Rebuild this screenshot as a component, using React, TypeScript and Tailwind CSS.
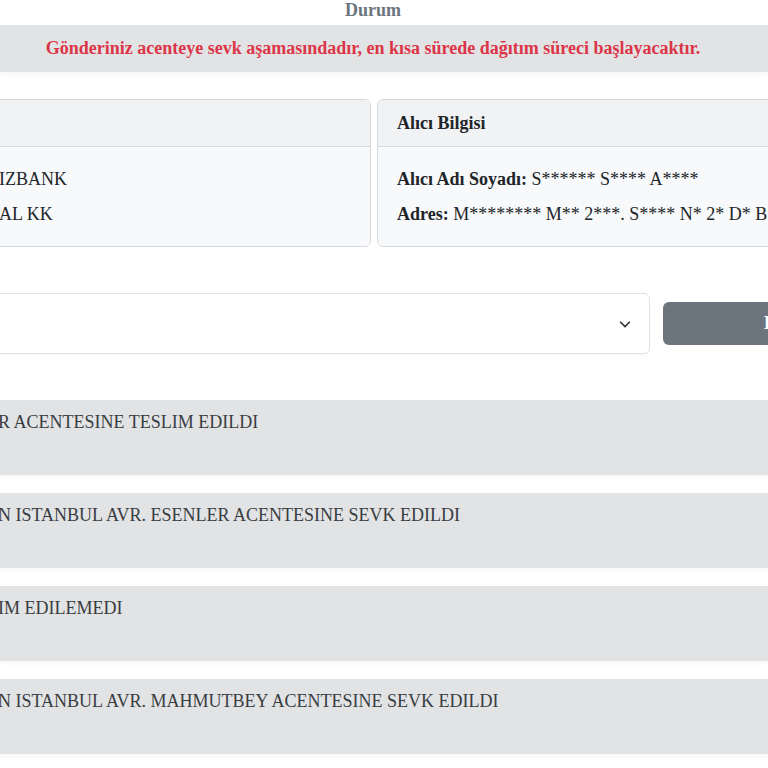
const serif = "font-['Liberation_Serif','Times_New_Roman',serif]"

const steps = [
  'R ACENTESINE TESLIM EDILDI',
  'N ISTANBUL AVR. ESENLER ACENTESINE SEVK EDILDI',
  'IM EDILEMEDI',
  'N ISTANBUL AVR. MAHMUTBEY ACENTESINE SEVK EDILDI',
]

function Chevron() {
  return (
    <svg width="14" height="14" viewBox="0 0 16 16" fill="none" stroke="#343a40" strokeWidth="2" strokeLinecap="round" strokeLinejoin="round">
      <path d="M3 6l5 5 5-5" />
    </svg>
  )
}

export default function App() {
  return (
    <div className={`w-[768px] h-[768px] overflow-hidden bg-white ${serif}`}>
      <div className="h-[25px] flex items-start justify-center pr-[22px]">
        <span className="text-[18px] leading-[21px] font-bold text-[#6c757d]">Durum</span>
      </div>

      <div className="h-[47px] bg-[#e2e3e5] flex items-center justify-center pr-[22px] shadow-[0_3px_3px_rgba(0,0,0,0.03)]">
        <span className="text-[18px] font-bold text-[#dc3548] whitespace-nowrap">
          Gönderiniz acenteye sevk aşamasındadır, en kısa sürede dağıtım süreci başlayacaktır.
        </span>
      </div>

      <div className="mt-[27px] flex gap-[6px] -ml-[20px] w-[840px]">
        <div className="w-[391px] h-[148px] rounded-[6px] border border-[#d6d8db] overflow-hidden flex flex-col">
          <div className="h-[47px] bg-[#f1f2f4] border-b border-[#d6d8db]" />
          <div className="flex-1 bg-[#f8f9fa] pl-[18px] pt-[15px] text-[18px] leading-[35px] text-[#212529]">
            <div>IZBANK</div>
            <div>AL KK</div>
          </div>
        </div>
        <div className="flex-1 h-[148px] rounded-[6px] border border-[#d6d8db] overflow-hidden flex flex-col">
          <div className="h-[47px] bg-[#f1f2f4] border-b border-[#d6d8db] flex items-center pl-[19px]">
            <span className="text-[18px] font-bold text-[#212529]">Alıcı Bilgisi</span>
          </div>
          <div className="flex-1 bg-[#f8f9fa] pl-[19px] pt-[15px] text-[18px] leading-[35px] text-[#212529] whitespace-nowrap">
            <div>
              <b>Alıcı Adı Soyadı:</b> S****** S**** A****
            </div>
            <div>
              <b>Adres:</b> M******** M** 2***. S**** N* 2* D* B***
            </div>
          </div>
        </div>
      </div>

      <div className="mt-[46px] flex items-center gap-[13px] -ml-[20px] w-[900px]">
        <div className="w-[670px] h-[61px] rounded-[6px] border border-[#dee2e6] bg-white flex items-center justify-end pr-[17px] shadow-[0_1px_2px_rgba(0,0,0,0.04)]">
          <Chevron />
        </div>
        <button type="button" className="w-[200px] h-[43px] rounded-[6px] bg-[#6c757d] text-white text-[18px] font-bold flex items-center pl-[101px]">
          Listele
        </button>
      </div>

      <div className="mt-[46px] flex flex-col gap-[18px]">
        {steps.map((s) => (
          <div key={s} className="h-[75px] bg-[#e2e3e5] pt-[10px] shadow-[0_3px_4px_rgba(0,0,0,0.03)]">
            <div className="-ml-[2px] text-[18px] leading-[24px] text-[#383d41] whitespace-nowrap">{s}</div>
          </div>
        ))}
      </div>
    </div>
  )
}
